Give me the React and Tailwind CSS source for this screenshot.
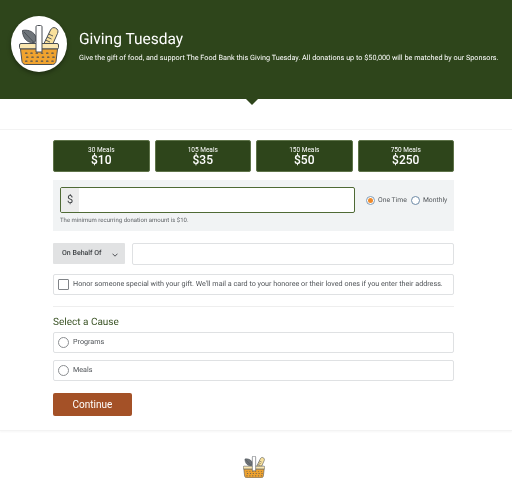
const amounts = [
  { meals: "30 Meals", price: "$10" },
  { meals: "105 Meals", price: "$35" },
  { meals: "150 Meals", price: "$50" },
  { meals: "750 Meals", price: "$250" },
];

function Basket({ className }) {
  const holes = [];
  [55, 63, 71].forEach((y, row) => {
    for (let i = 0; i < 6; i++) {
      holes.push(<rect key={`${row}-${i}`} x={12 + i * 10.500 + (row % 2) * 2} y={y} width="5" height="2.500" rx="1.200" fill="#4a4f55" />);
    }
  });
  return (
    <svg className={className} viewBox="0 0 80 80" aria-hidden="true">
      <path d="M7 11c9-2 20 1 25 9 3 5 2 11-1 15-8 1-16-2-20-9-3-5-4-10-4-15z" fill="#6f757a" stroke="#4a4f55" strokeWidth="2" />
      <path d="M10 14l19 20" stroke="#3f4449" strokeWidth="1.500" />
      <path d="M50 37l13-27c2-4 6-6 10-4 5 2 6 7 4 11L68 37z" fill="#f8e09c" stroke="#4a4f55" strokeWidth="2" />
      <path d="M59 18l9 4M56 24l9 4M53 30l9 4" stroke="#4a4f55" strokeWidth="1.800" />
      <rect x="1" y="37" width="78" height="11" rx="3" fill="#fbe7b0" stroke="#4a4f55" strokeWidth="2" />
      <path d="M3 48h74l-3 25c-.5 3-3 6-7 6H13c-4 0-6.500-3-7-6z" fill="#f0a32f" stroke="#4a4f55" strokeWidth="2" />
      {holes}
      <path d="M34 54V4c0-2 1-3 3-3h6c2 0 3 1 3 3v50z" fill="#fff" stroke="#4a4f55" strokeWidth="2" />
    </svg>
  );
}

function Radio({ checked }) {
  return (
    <span className={`flex h-[9px] w-[9px] shrink-0 items-center justify-center rounded-full border bg-white ${checked ? "border-[#7f9cb8]" : "border-[#6d8aa6]"}`}>
      {checked && <span className="h-[5px] w-[5px] rounded-full bg-[#ee8a2c]" />}
    </span>
  );
}

function CauseRow({ label }) {
  return (
    <div className="flex h-[21px] items-center gap-[4px] rounded-[2px] border border-[#dfe1e3] bg-white pl-[4px]">
      <span className="h-[11px] w-[11px] shrink-0 rounded-full border-[1.500px] border-[#8b8e91] bg-white" />
      <span className="text-[7.200px] text-[#4f5357]">{label}</span>
    </div>
  );
}

export default function App() {
  return (
    <div className="min-h-[481px] overflow-hidden bg-white font-['Roboto',sans-serif] [text-rendering:geometricPrecision] [will-change:transform]">
      <header className="relative flex h-[99px] items-start gap-[12px] bg-[#2e451b] pl-[11px] pt-[16px]">
        <div className="flex h-[56px] w-[56px] shrink-0 items-center justify-center rounded-full bg-white pt-[2px] shadow-[0_2px_4px_rgba(0,0,0,0.35)]">
          <Basket className="h-[40px] w-[40px]" />
        </div>
        <div className="pt-[13px] text-white">
          <h1 className="text-[15.500px] leading-[20px]">Giving Tuesday</h1>
          <p className="mt-[4px] whitespace-nowrap text-[7.260px] leading-[10px]">
            Give the gift of food, and support The Food Bank this Giving Tuesday. All donations up to $50,000 will be matched by our Sponsors.
          </p>
        </div>
        <span className="absolute left-[246px] top-[99px] h-0 w-0 border-x-[6px] border-t-[6px] border-x-transparent border-t-[#2e451b]" />
      </header>

      <main className="mt-[30px] border-y border-y-[#f3f3f3] px-[53px] pb-[14px] pt-[10px] shadow-[0_1px_2px_rgba(0,0,0,0.04)]">
        <div className="w-[401px]">
          <div className="grid grid-cols-4 gap-[5px]">
            {amounts.map((a) => (
              <button key={a.price} type="button" className="flex h-[32px] flex-col items-center justify-center rounded-[2px] border border-[#5e7349] bg-[#2e451b] text-white">
                <span className="text-[6.500px] leading-[8px]">{a.meals}</span>
                <span className="text-[12px] font-medium leading-[13px]">{a.price}</span>
              </button>
            ))}
          </div>

          <div className="mt-[8px] h-[51px] bg-[#f1f3f4] px-[7px] pt-[7px]">
            <div className="flex items-center">
              <div className="flex h-[26px] w-[295px] shrink-0 overflow-hidden rounded-[2px] border-[1.500px] border-[#4f6a35] bg-white">
                <span className="flex w-[18px] items-center justify-center bg-[#ececec] text-[11px] text-[#3c3f42]">$</span>
              </div>
              <div className="ml-[11px] flex items-center gap-[3px] whitespace-nowrap text-[6.800px] text-[#55595d]">
                <Radio checked />
                <span className="mr-[1px]">One Time</span>
                <Radio />
                <span>Monthly</span>
              </div>
            </div>
            <p className="mt-[4px] text-[6px] leading-[8px] text-[#5f6367]">The minimum recurring donation amount is $10.</p>
          </div>

          <div className="mt-[12px] flex gap-[7px]">
            <div className="flex h-[21px] w-[72px] items-center rounded-[1px] bg-[#e1e2e3] pl-[9px] text-[7px] font-medium text-[#3f4346]">
              <span>On Behalf Of</span>
              <svg className="ml-[10px] mt-[3px] h-[4px] w-[6px]" viewBox="0 0 6 4" fill="none" aria-hidden="true">
                <path d="M.5.7 3 3.200 5.500.7" stroke="#3f4346" strokeWidth="0.9" />
              </svg>
            </div>
            <div className="h-[22px] flex-1 rounded-[2px] border border-[#dfe1e3] bg-white" />
          </div>

          <div className="mt-[9px] flex h-[21px] items-center gap-[4px] rounded-[2px] border border-[#dfe1e3] bg-white pl-[4px]">
            <span className="h-[11px] w-[11px] shrink-0 rounded-[1px] border-[1.500px] border-[#808387] bg-white" />
            <span className="whitespace-nowrap text-[7.200px] text-[#4f5357]">
              Honor someone special with your gift. We'll mail a card to your honoree or their loved ones if you enter their address.
            </span>
          </div>

          <div className="mt-[11px] h-px bg-[#eeeeee]" />

          <h2 className="mt-[10px] text-[10px] leading-[12px] text-[#3a5325]">Select a Cause</h2>

          <div className="mt-[3px] flex flex-col gap-[7px]">
            <CauseRow label="Programs" />
            <CauseRow label="Meals" />
          </div>

          <button type="button" className="mt-[12px] h-[23px] w-[79px] rounded-[2px] bg-[#a45127] text-[10px] text-white">
            Continue
          </button>
        </div>
      </main>

      <footer className="flex justify-center pr-[5px] pt-[25px]">
        <Basket className="h-[22px] w-[22px]" />
      </footer>
    </div>
  );
}
